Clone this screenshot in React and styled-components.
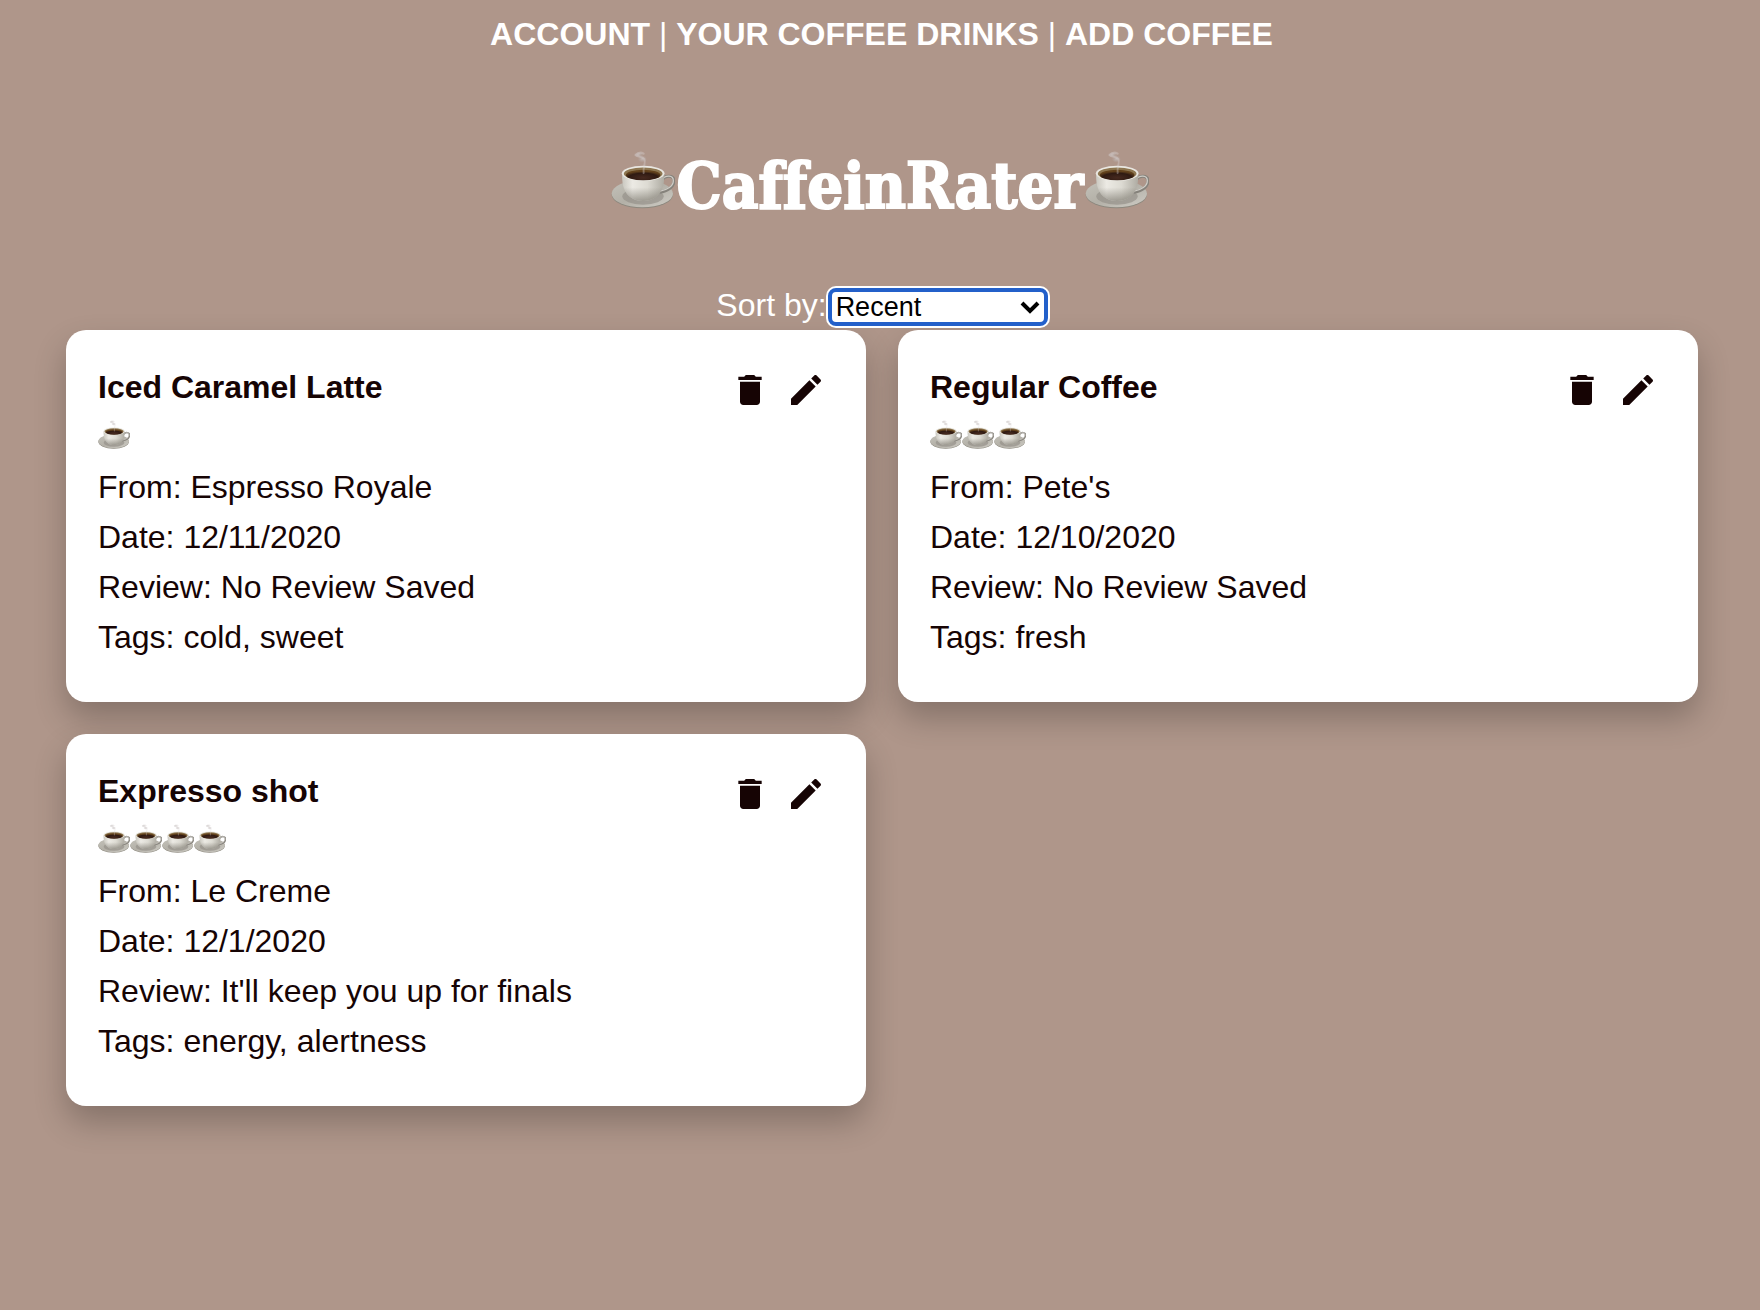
import React, { useId, useState } from 'react';
import styled, { createGlobalStyle } from 'styled-components';

const GlobalStyle = createGlobalStyle`
  *, *::before, *::after { box-sizing: border-box; }
  body {
    margin: 0;
    background: #af968a;
    color: #160404;
    font-family: "Liberation Sans", Arial, Helvetica, sans-serif;
    font-size: 32px;
    line-height: 36px;
  }
`;

const Nav = styled.nav`
  padding: 16px 0 0 3px;
  text-align: center;
  color: #fff;
`;

const NavLink = styled.a`
  color: inherit;
  font-weight: bold;
  text-decoration: none;
`;

const Title = styled.h1`
  display: flex;
  justify-content: center;
  align-items: center;
  gap: 2px;
  margin: 88px 0 54px;
  color: #fff;
  font-family: "DejaVu Serif Condensed", "DejaVu Serif", serif;
  font-size: 63px;
  font-weight: bold;
  font-variant-ligatures: none;
  line-height: 92px;
  -webkit-text-stroke: 2px #fff;
`;

const SortBar = styled.div`
  display: flex;
  justify-content: center;
  align-items: flex-start;
  height: 44px;
  padding: 1px 0 0 4px;
  color: #fff;
`;

const SelectWrap = styled.span`
  position: relative;
  display: inline-flex;
  margin: 1px 0 0 1px;
`;

const Select = styled.select`
  appearance: none;
  width: 220px;
  height: 38px;
  padding: 0 36px 0 4px;
  border: 4px solid #2360ca;
  border-radius: 8px;
  outline: none;
  box-shadow: 0 0 0 2px #fff;
  background: #fff;
  color: #000;
  font-family: inherit;
  font-size: 27px;
  line-height: 30px;
`;

const Chevron = styled.svg`
  position: absolute;
  right: 8px;
  top: 12px;
  width: 20px;
  height: 14px;
  pointer-events: none;
`;

const Grid = styled.main`
  display: grid;
  grid-template-columns: repeat(2, minmax(0, 1fr));
  gap: 32px;
  padding: 0 62px 64px 66px;
`;

const Card = styled.article`
  padding: 32px 32px 40px;
  border-radius: 20px;
  background: #fff;
  box-shadow: 0 16px 32px rgba(0, 0, 0, 0.24);
`;

const CardHeader = styled.header`
  display: flex;
  justify-content: space-between;
  align-items: center;
`;

const Name = styled.h2`
  margin: 0;
  font-size: 32px;
  line-height: 50px;
`;

const Actions = styled.div`
  display: flex;
  gap: 16px;
  padding: 6px 8px 0 0;
`;

const IconButton = styled.button`
  display: flex;
  padding: 0;
  border: 0;
  background: none;
  color: inherit;
  cursor: pointer;
`;

const Icon = styled.svg`
  width: 40px;
  height: 40px;
  fill: currentColor;
`;

const Rating = styled.div`
  display: flex;
  align-items: center;
  height: 50px;
`;

const Detail = styled.p`
  margin: 0;
  line-height: 50px;
`;

const CupSvg = styled.svg`
  flex: none;
  width: ${({ $size }) => $size}px;
  aspect-ratio: 192 / 222;
`;

function Cup({ size }) {
  const id = useId().replace(/[^a-zA-Z0-9]/g, '');
  return (
    <CupSvg $size={size} viewBox="12 6 192 222" aria-hidden="true">
      <defs>
        <linearGradient id={`${id}s`} x1="0" x2="1" y1="0" y2="1">
          <stop offset="0" stopColor="#c4c2ba" />
          <stop offset=".5" stopColor="#b3b0a7" />
          <stop offset="1" stopColor="#cfcdc6" />
        </linearGradient>
        <linearGradient id={`${id}c`} x1="0" x2="1">
          <stop offset="0" stopColor="#c9c7bf" />
          <stop offset=".25" stopColor="#eceae4" />
          <stop offset=".6" stopColor="#dddbd3" />
          <stop offset="1" stopColor="#aeaba2" />
        </linearGradient>
        <linearGradient id={`${id}b`} x1="0" x2="0" y1="0" y2="1">
          <stop offset=".5" stopColor="#706c62" stopOpacity="0" />
          <stop offset="1" stopColor="#706c62" stopOpacity=".6" />
        </linearGradient>
        <radialGradient id={`${id}k`} cx=".5" cy=".75" r=".6">
          <stop offset="0" stopColor="#46291f" />
          <stop offset=".7" stopColor="#2f1a12" />
          <stop offset="1" stopColor="#63421c" />
        </radialGradient>
        <radialGradient id={`${id}v`}>
          <stop offset="0" stopColor="#c9c3c2" stopOpacity=".75" />
          <stop offset="1" stopColor="#b8b0b0" stopOpacity="0" />
        </radialGradient>
      </defs>
      <ellipse cx="106" cy="143" rx="92" ry="41" fill="#8c887e" />
      <ellipse cx="106" cy="140" rx="92" ry="41" fill={`url(#${id}s)`} />
      <ellipse cx="108" cy="148" rx="62" ry="25" fill="#96928a" opacity=".7" />
      <path d="M164 99c12-16 37-15 37 3 0 17-18 30-44 34" fill="none" stroke="#85827b" strokeWidth="9" />
      <path d="M164 98c12-15 35-14 35 3 0 16-18 28-42 32" fill="none" stroke="#cfccc6" strokeWidth="4" />
      <path d="M45 80c0 39 8 59 29 73 18 12 50 12 68 0 22-14 30-34 30-73z" fill={`url(#${id}c)`} />
      <path d="M45 80c0 39 8 59 29 73 18 12 50 12 68 0 22-14 30-34 30-73z" fill={`url(#${id}b)`} />
      <ellipse cx="108.500" cy="79" rx="64" ry="22.500" fill="#e9e7e1" />
      <ellipse cx="108.500" cy="80" rx="58" ry="18.500" fill="#8d7650" />
      <ellipse cx="108.500" cy="84" rx="52" ry="16" fill={`url(#${id}k)`} />
      <ellipse cx="95" cy="23" rx="15" ry="9" fill={`url(#${id}v)`} />
      <ellipse cx="106" cy="36" rx="14" ry="11" fill={`url(#${id}v)`} />
      <path d="M110 78c-3-20 8-30 2-42-6-9-20-5-26-12 8-8 18-8 24-4" fill="none" stroke="#ddd8d6" strokeOpacity=".35" strokeWidth="6" strokeLinecap="round" />
    </CupSvg>
  );
}

const TRASH = 'M6 19c0 1.100.9 2 2 2h8c1.100 0 2-.9 2-2V7H6v12zM19 4h-3.500l-1-1h-5l-1 1H5v2h14V4z';
const PENCIL = 'M3 17.250V21h3.750L17.810 9.940l-3.750-3.750L3 17.250zM20.710 7.040c.39-.39.39-1.020 0-1.410l-2.340-2.340c-.39-.39-1.020-.39-1.410 0l-1.830 1.830 3.750 3.750 1.830-1.830z';

const DRINKS = [
  { name: 'Iced Caramel Latte', rating: 1, from: 'Espresso Royale', date: '12/11/2020', review: 'No Review Saved', tags: 'cold, sweet' },
  { name: 'Regular Coffee', rating: 3, from: "Pete's", date: '12/10/2020', review: 'No Review Saved', tags: 'fresh' },
  { name: 'Expresso shot', rating: 4, from: 'Le Creme', date: '12/1/2020', review: "It'll keep you up for finals", tags: 'energy, alertness' },
];

function DrinkCard({ drink }) {
  return (
    <Card>
      <CardHeader>
        <Name>{drink.name}</Name>
        <Actions>
          <IconButton type="button" aria-label={`Delete ${drink.name}`}>
            <Icon viewBox="0 0 24 24"><path d={TRASH} /></Icon>
          </IconButton>
          <IconButton type="button" aria-label={`Edit ${drink.name}`}>
            <Icon viewBox="0 0 24 24"><path d={PENCIL} /></Icon>
          </IconButton>
        </Actions>
      </CardHeader>
      <Rating role="img" aria-label={`${drink.rating} out of 5`}>
        {Array.from({ length: drink.rating }, (_, i) => <Cup key={i} size={32} />)}
      </Rating>
      <Detail>From: {drink.from}</Detail>
      <Detail>Date: {drink.date}</Detail>
      <Detail>Review: {drink.review}</Detail>
      <Detail>Tags: {drink.tags}</Detail>
    </Card>
  );
}

export default function App() {
  const [sort, setSort] = useState('recent');
  return (
    <>
      <GlobalStyle />
      <Nav>
        <NavLink href="#account">ACCOUNT</NavLink> | <NavLink href="#drinks">YOUR COFFEE DRINKS</NavLink> | <NavLink href="#add">ADD COFFEE</NavLink>
      </Nav>
      <Title><Cup size={64} />CaffeinRater<Cup size={64} /></Title>
      <SortBar>
        <label htmlFor="sort">Sort by:</label>
        <SelectWrap>
          <Select id="sort" value={sort} onChange={(e) => setSort(e.target.value)}>
            <option value="recent">Recent</option>
          </Select>
          <Chevron viewBox="0 0 20 14"><path d="M2 3l8 8 8-8" fill="none" stroke="#000" strokeWidth="4" /></Chevron>
        </SelectWrap>
      </SortBar>
      <Grid>
        {DRINKS.map((d) => <DrinkCard key={d.name} drink={d} />)}
      </Grid>
    </>
  );
}
